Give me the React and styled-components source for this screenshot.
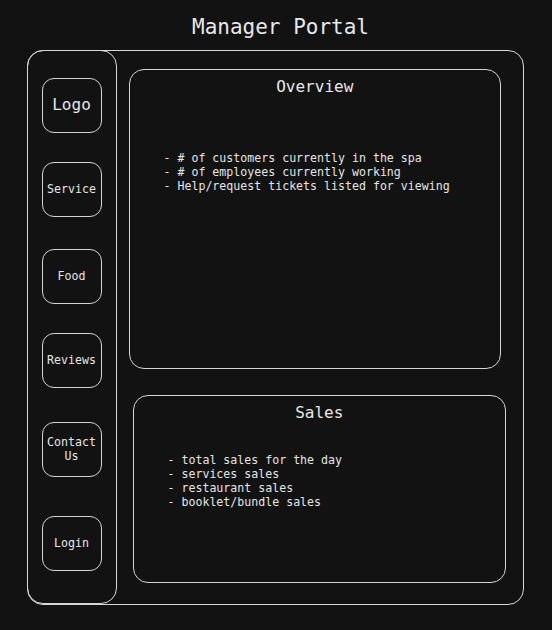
import styled, { createGlobalStyle } from "styled-components";

const GlobalStyle = createGlobalStyle`
  html, body {
    margin: 0;
    padding: 0;
    background: #121212;
  }
  body {
    font-family: "DejaVu Sans Mono", "Liberation Mono", monospace;
    color: #e6e6e6;
  }
`;

const Page = styled.div`
  width: 552px;
  height: 630px;
  box-sizing: border-box;
  padding: 0 28px 0 27px;
  display: flex;
  flex-direction: column;
`;

const Title = styled.h1`
  margin: 0;
  height: 50px;
  display: flex;
  align-items: center;
  justify-content: center;
  padding: 4px 0 0 10px;
  box-sizing: border-box;
  font-size: 21px;
  font-weight: 400;
  color: #e8e8e8;
`;

const Frame = styled.div`
  height: 555px;
  box-sizing: border-box;
  border: 1.5px solid #d8d8d8;
  border-radius: 16px;
  display: flex;
`;

const Sidebar = styled.nav`
  width: 90px;
  box-sizing: border-box;
  margin: -1.5px 0 0 -1.5px;
  height: 554px;
  border: 1.5px solid #d8d8d8;
  border-radius: 16px;
  padding: 0 0 0 14px;
  display: flex;
  flex-direction: column;
`;

const NavButton = styled.div`
  width: 60px;
  height: 55px;
  margin-top: ${(p) => p.$top}px;
  box-sizing: border-box;
  border: 1.5px solid #d4d4d4;
  border-radius: 12px;
  display: flex;
  align-items: center;
  justify-content: center;
  text-align: center;
  font-size: ${(p) => (p.$big ? "16px" : "11.6px")};
  line-height: 14px;
  color: #e6e6e6;
`;

const Content = styled.div`
  flex: 1;
  display: flex;
  flex-direction: column;
  padding-top: 18px;
  gap: 26px;
`;

const Panel = styled.section`
  height: ${(p) => p.$h}px;
  margin: 0 ${(p) => p.$right}px 0 ${(p) => p.$left}px;
  box-sizing: border-box;
  border: 1.5px solid #d6d6d6;
  border-radius: 15px;
  padding: 7px 0 0 34px;
`;

const PanelTitle = styled.h2`
  margin: 0 0 ${(p) => p.$gap}px -34px;
  text-align: center;
  font-size: 16px;
  font-weight: 400;
  line-height: 20px;
  color: #e8e8e8;
`;

const List = styled.div`
  font-size: 11.6px;
  line-height: 14px;
  white-space: pre;
  color: #e6e6e6;
`;

const nav = [
  { label: "Logo", big: true, top: 27 },
  { label: "Service", top: 29 },
  { label: "Food", top: 32 },
  { label: "Reviews", top: 29 },
  { label: "Contact Us", top: 34 },
  { label: "Login", top: 39 },
];

const overview = [
  "- # of customers currently in the spa",
  "- # of employees currently working",
  "- Help/request tickets listed for viewing",
];

const sales = [
  "- total sales for the day",
  "- services sales",
  "- restaurant sales",
  "- booklet/bundle sales",
];

export default function App() {
  return (
    <>
      <GlobalStyle />
      <Page>
        <Title>Manager Portal</Title>
        <Frame>
          <Sidebar>
            {nav.map((n) => (
              <NavButton key={n.label} $big={n.big} $top={n.top}>
                {n.label}
              </NavButton>
            ))}
          </Sidebar>
          <Content>
            <Panel $h={300} $left={12} $right={22}>
              <PanelTitle $gap={54}>Overview</PanelTitle>
              <List>
                {overview.map((l) => (
                  <div key={l}>{l}</div>
                ))}
              </List>
            </Panel>
            <Panel $h={188} $left={16} $right={17}>
              <PanelTitle $gap={30}>Sales</PanelTitle>
              <List>
                {sales.map((l) => (
                  <div key={l}>{l}</div>
                ))}
              </List>
            </Panel>
          </Content>
        </Frame>
      </Page>
    </>
  );
}
